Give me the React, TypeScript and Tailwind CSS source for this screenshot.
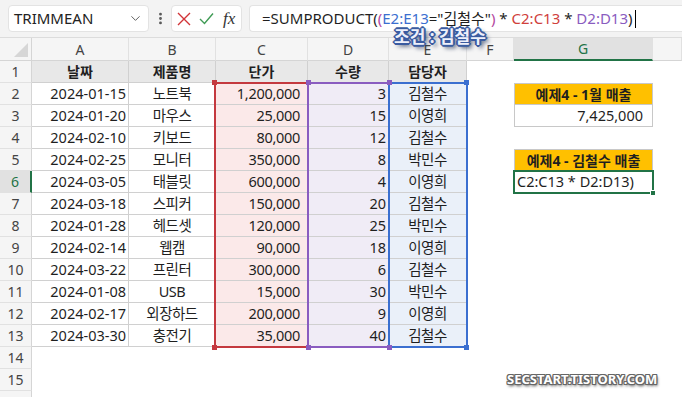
import { ChevronDown, EllipsisVertical } from "lucide-react";

const data = [
  ["2024-01-15", "노트북", "1,200,000", "3", "김철수"],
  ["2024-01-20", "마우스", "25,000", "15", "이영희"],
  ["2024-02-10", "키보드", "80,000", "12", "김철수"],
  ["2024-02-25", "모니터", "350,000", "8", "박민수"],
  ["2024-03-05", "태블릿", "600,000", "4", "이영희"],
  ["2024-03-18", "스피커", "150,000", "20", "김철수"],
  ["2024-01-28", "헤드셋", "120,000", "25", "박민수"],
  ["2024-02-14", "웹캠", "90,000", "18", "이영희"],
  ["2024-03-22", "프린터", "300,000", "6", "김철수"],
  ["2024-01-08", "USB", "15,000", "30", "박민수"],
  ["2024-02-17", "외장하드", "200,000", "9", "이영희"],
  ["2024-03-30", "충전기", "35,000", "40", "김철수"],
];

const letters = ["A", "B", "C", "D", "E", "F", "G", ""];

const cellBase = "flex items-center border-r border-b border-[#d0d0d0] text-[14.5px]";
const dataCls = [
  "justify-end pr-[2px] bg-white",
  "justify-center bg-white tracking-[-0.5px]",
  "justify-end pr-[7px] bg-[#fbe9e9] tracking-[-0.3px]",
  "justify-end pr-[2px] bg-[#f0ecf6]",
  "justify-center bg-[#eaf0f9] tracking-[-0.5px]",
];

function FormulaBar() {
  return (
    <div className="flex h-[38px] items-start border-b border-[#dcdcdc] bg-[#f3f3f3] pt-[5px] pl-2">
      <div className="flex h-[27px] w-[141px] items-center justify-between rounded-[4px] border border-[#e3e3e3] bg-white pl-[5px] pr-[5px]">
        <span className="text-[15px] text-[#222]">TRIMMEAN</span>
        <ChevronDown size={15} strokeWidth={1.5} className="text-[#555]" />
      </div>
      <div className="flex h-[27px] w-[22px] items-center justify-center">
        <EllipsisVertical size={15} strokeWidth={2.5} className="text-[#555]" />
      </div>
      <div className="flex h-[27px] w-[71px] items-center rounded-[4px] border border-[#e3e3e3] bg-white pl-[5px]">
        <svg width="14" height="14" viewBox="0 0 14 14">
          <path d="M1 1 L13 13 M13 1 L1 13" stroke="#d13438" strokeWidth="1.4" fill="none" />
        </svg>
        <svg width="15" height="13" viewBox="0 0 15 13" className="ml-[8px]">
          <path d="M1 7 L5.5 11.5 L14 1.5" stroke="#3f9b55" strokeWidth="1.4" fill="none" />
        </svg>
        <span className="ml-[9px] font-['Liberation_Serif',serif] text-[17px] italic text-[#333]">fx</span>
      </div>
      <div className="ml-[7px] flex h-[27px] flex-1 items-center rounded-l-[4px] border border-r-0 border-[#e3e3e3] bg-white pl-[12px] text-[15px] whitespace-nowrap">
        <span>=SUMPRODUCT(</span>
        <span className="text-[#b4479e]">(</span>
        <span className="text-[#3b6fd0]">E2:E13</span>
        <span>="김철수"</span>
        <span className="text-[#b4479e]">)</span>
        <span>&nbsp;*&nbsp;</span>
        <span className="text-[#d0403c]">C2:C13</span>
        <span>&nbsp;*&nbsp;</span>
        <span className="text-[#8a5cc0]">D2:D13</span>
        <span>)</span>
        <span className="ml-[2px] h-[18px] w-px bg-black" />
      </div>
    </div>
  );
}

function Sheet() {
  const rows = Array.from({ length: 16 }, (_, i) => i + 1);
  return (
    <div className="relative grid grid-cols-[32px_97px_87px_92px_81px_78px_47px_139px_1fr] grid-rows-[23px_repeat(16,22px)]">
      <div className="relative border-r border-b border-[#d5d5d5] bg-[#f5f5f5]">
        <svg width="14" height="14" className="absolute right-[3px] bottom-[3px]">
          <polygon points="14,0 14,14 0,14" fill="#d6d6d6" />
        </svg>
      </div>
      {letters.map((l, i) =>
        l === "G" ? (
          <div key={i} className="flex items-center justify-center border-r border-b-2 border-r-[#e1e1e1] border-b-[#217346] bg-[#e1e1e1] text-[14px] text-[#217346]">
            {l}
          </div>
        ) : (
          <div key={i} className="flex items-center justify-center border-r border-b border-r-[#e1e1e1] border-b-[#d5d5d5] bg-[#f5f5f5] text-[14px] text-[#444]">
            {l}
          </div>
        )
      )}
      {rows.map((r) => (
        <Row key={r} r={r} />
      ))}

      {/* range highlights */}
      <div className="pointer-events-none absolute left-[214px] top-[44px] h-[266px] w-[95px] border-2 border-[#c4393f]" />
      <div className="pointer-events-none absolute left-[307px] top-[44px] h-[266px] w-[83px] border-2 border-[#8a5cc0]" />
      <div className="pointer-events-none absolute left-[388px] top-[44px] h-[266px] w-[80px] border-2 border-[#3b6fd0]" />
      <div className="absolute left-[212px] top-[42px] h-[5px] w-[5px] bg-[#c4393f]" />
      <div className="absolute left-[212px] top-[307px] h-[5px] w-[5px] bg-[#c4393f]" />
      <div className="absolute left-[306px] top-[42px] h-[5px] w-[5px] bg-[#8a5cc0]" />
      <div className="absolute left-[306px] top-[307px] h-[5px] w-[5px] bg-[#8a5cc0]" />
      <div className="absolute left-[387px] top-[42px] h-[5px] w-[5px] bg-[#8a5cc0]" />
      <div className="absolute left-[387px] top-[307px] h-[5px] w-[5px] bg-[#8a5cc0]" />
      <div className="absolute left-[464px] top-[42px] h-[5px] w-[5px] bg-[#3b6fd0]" />
      <div className="absolute left-[464px] top-[307px] h-[5px] w-[5px] bg-[#3b6fd0]" />
    </div>
  );
}

function GCell({ r }: { r: number }) {
  if (r === 2)
    return (
      <div className="flex items-center justify-center border border-[#c8c8c8] bg-[#ffc000] text-[14px] font-bold">
        예제4 - 1월 매출
      </div>
    );
  if (r === 3)
    return (
      <div className="flex items-center justify-end border border-t-0 border-[#c8c8c8] bg-white pr-[9px] text-[14.5px]">
        7,425,000
      </div>
    );
  if (r === 5)
    return (
      <div className="flex items-center justify-center border border-[#c8c8c8] bg-[#ffc000] text-[14px] font-bold">
        예제4 - 김철수 매출
      </div>
    );
  if (r === 6)
    return (
      <div className="relative -ml-px -mt-px flex h-[24px] w-[141px] items-center border-2 border-[#217346] bg-white pl-[2px] text-[14.5px]">
        C2:C13 * D2:D13)
        <span className="absolute -right-[4px] -bottom-[4px] h-[6px] w-[6px] border border-white bg-[#217346]" />
      </div>
    );
  return <div />;
}

function Row({ r }: { r: number }) {
  const active = r === 6;
  return (
    <>
      <div
        className={
          active
            ? "flex items-center justify-center border-r-2 border-b border-r-[#217346] border-b-[#e1e1e1] bg-[#e1e1e1] text-[14px] text-[#217346]"
            : "flex items-center justify-center border-r border-b border-r-[#d5d5d5] border-b-[#e1e1e1] bg-[#f5f5f5] text-[14px] text-[#444]"
        }
      >
        {r < 16 ? r : ""}
      </div>
      {r === 1
        ? ["날짜", "제품명", "단가", "수량", "담당자"].map((h) => (
            <div key={h} className={`${cellBase} justify-center bg-[#e8e8e8] text-[14px] font-bold`}>
              {h}
            </div>
          ))
        : r <= 13
        ? data[r - 2].map((v, i) => (
            <div key={i} className={`${cellBase} ${dataCls[i]}`}>
              {v}
            </div>
          ))
        : [0, 1, 2, 3, 4].map((i) => <div key={i} />)}
      <div />
      <GCell r={r} />
      <div />
    </>
  );
}

export default function App() {
  return (
    <div className="relative h-[397px] w-[682px] overflow-hidden bg-white font-['Noto_Sans','Noto_Sans_CJK_KR',sans-serif] text-[#1f1f1f]">
      <FormulaBar />
      <Sheet />
      <div className="absolute left-[394px] top-[26px] text-[17px] leading-[22px] font-bold whitespace-nowrap text-[#eef0fb] [text-shadow:2px_0_0_#3a5ba0,-2px_0_0_#3a5ba0,0_2px_0_#3a5ba0,0_-2px_0_#3a5ba0,1px_1px_0_#3a5ba0,-1px_-1px_0_#3a5ba0,1px_-1px_0_#3a5ba0,-1px_1px_0_#3a5ba0,3px_3px_4px_#1a2a50]">
        조건 : 김철수
      </div>
      <div className="absolute left-[507px] top-[370px] text-[13px] font-bold whitespace-nowrap text-white [text-shadow:1px_0_0_#666,-1px_0_0_#666,0_1px_0_#666,0_-1px_0_#666,1px_1px_0_#666,-1px_-1px_0_#666,1px_-1px_0_#666,-1px_1px_0_#666,1px_2px_3px_#333]">
        SECSTART.TISTORY.COM
      </div>
    </div>
  );
}
